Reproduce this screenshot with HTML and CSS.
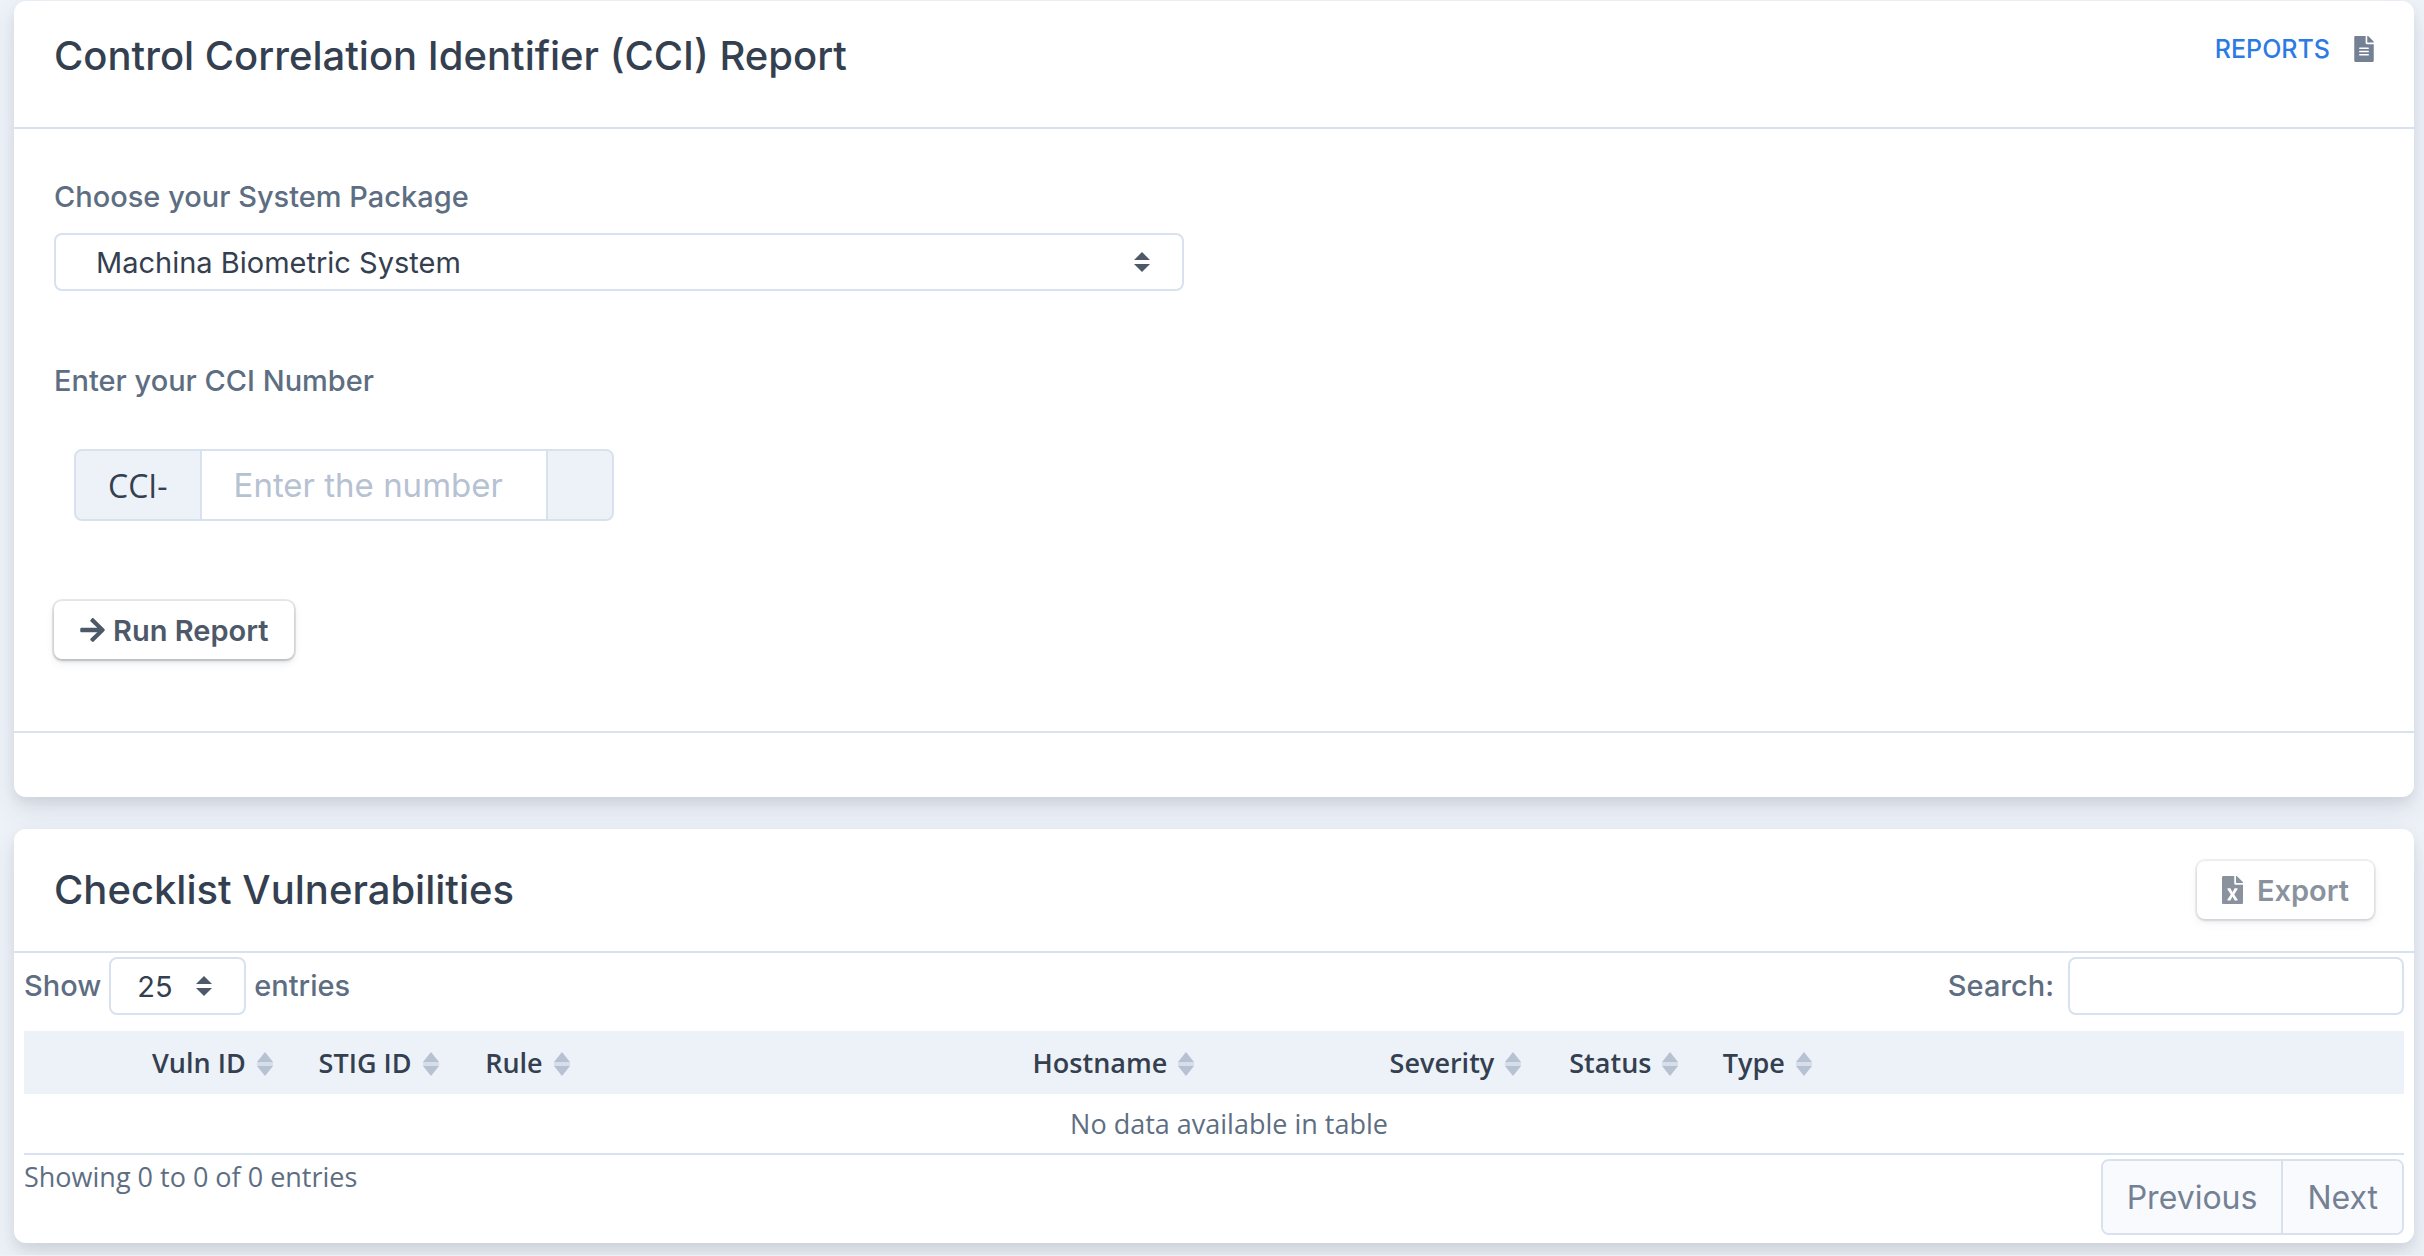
FILE: index.html
```html
<!DOCTYPE html>
<html lang="en">
<head>
    <meta charset="UTF-8">
    <meta name="viewport" content="width=device-width, initial-scale=1.0">
    <title>Control Correlation Identifier (CCI) Report</title>
    <link rel="stylesheet" href="styles.css">
</head>
<body>
    <!-- shared icons -->
    <svg class="sprite" aria-hidden="true">
        <symbol id="updown" viewBox="0 0 16 20">
            <path d="M8 0l8 8H0zM0 12h16l-8 8z" />
        </symbol>
        <symbol id="sort" viewBox="0 0 16 24">
            <path d="M8 0l8 10H0zM0 14h16L8 24z" />
            <path d="M0 10h16v4H0z" opacity="0.4" />
        </symbol>
    </svg>

    <div class="card">
        <div class="card-header report-header">
            <h4>Control Correlation Identifier (CCI) Report</h4>
            <div class="header-links">
                <a href="#">REPORTS</a>
                <svg class="icon-file" viewBox="0 0 384 512"><path d="M224 136V0H24C10.7 0 0 10.7 0 24v464c0 13.3 10.7 24 24 24h336c13.3 0 24-10.7 24-24V160H248c-13.2 0-24-10.8-24-24zm64 236c0 6.6-5.4 12-12 12H108c-6.6 0-12-5.4-12-12v-8c0-6.6 5.4-12 12-12h168c6.6 0 12 5.4 12 12v8zm0-64c0 6.6-5.4 12-12 12H108c-6.6 0-12-5.4-12-12v-8c0-6.6 5.4-12 12-12h168c6.6 0 12 5.4 12 12v8zm0-72v8c0 6.6-5.4 12-12 12H108c-6.6 0-12-5.4-12-12v-8c0-6.6 5.4-12 12-12h168c6.6 0 12 5.4 12 12zm96-114.1v6.1H256V0h6.1c6.4 0 12.5 2.5 17 7l97.9 98c4.5 4.5 7 10.6 7 16.9z" /></svg>
            </div>
        </div>
        <form class="card-body">
            <label for="systemPackage">Choose your System Package</label>
            <div class="select-box package-select">
                <select id="systemPackage">
                    <option>Machina Biometric System</option>
                </select>
                <svg class="updown"><use href="#updown" /></svg>
            </div>
            <label for="cciNumber">Enter your CCI Number</label>
            <div class="input-group">
                <span class="input-addon">CCI-</span>
                <input type="text" id="cciNumber" placeholder="Enter the number">
                <span class="input-addon"></span>
            </div>
            <button type="button" class="btn btn-run">
                <svg class="icon-arrow" viewBox="0 0 448 512"><path d="M190.5 66.9l22.2-22.2c9.4-9.4 24.6-9.4 33.9 0L441 239c9.4 9.4 9.4 24.6 0 33.9L246.6 467.3c-9.4 9.4-24.6 9.4-33.9 0l-22.2-22.2c-9.5-9.5-9.3-25 .4-34.3L311.4 296H24c-13.3 0-24-10.7-24-24v-32c0-13.3 10.7-24 24-24h287.4L190.9 101.2c-9.8-9.3-10-24.8-.4-34.3z" /></svg>
                Run Report
            </button>
        </form>
        <div class="card-footer"></div>
    </div>

    <div class="card">
        <div class="card-header list-header">
            <h4>Checklist Vulnerabilities</h4>
            <button type="button" class="btn btn-export" disabled>
                <svg class="icon-excel" viewBox="0 0 384 512"><path d="M224 136V0H24C10.7 0 0 10.7 0 24v464c0 13.3 10.7 24 24 24h336c13.3 0 24-10.7 24-24V160H248c-13.2 0-24-10.8-24-24zm60.1 106.5L224 336l60.1 93.5c5.1 8-.6 18.5-10.1 18.5h-34.9c-4.4 0-8.5-2.4-10.6-6.3C208.9 405.5 192 373 192 373c-6.4 14.8-10 20-36.6 68.8-2.1 3.9-6.1 6.3-10.5 6.3H110c-9.5 0-15.2-10.5-10.1-18.5l60.3-93.5-60.3-93.5c-5.2-8 .6-18.5 10.1-18.5h34.8c4.4 0 8.5 2.4 10.6 6.3 26.1 48.8 20 33.6 36.6 68.5 0 0 6.1-11.7 36.6-68.5 2.1-3.9 6.2-6.3 10.6-6.3H274c9.5-.1 15.2 10.4 10.1 18.4zM384 121.9v6.1H256V0h6.1c6.4 0 12.5 2.5 17 7l97.9 98c4.5 4.5 7 10.6 7 16.9z" /></svg>
                Export
            </button>
        </div>
        <div class="table-wrapper">
            <div class="table-tools">
                <div class="table-length">
                    <label for="pageLength">Show</label>
                    <div class="select-box length-select">
                        <select id="pageLength">
                            <option>25</option>
                        </select>
                        <svg class="updown"><use href="#updown" /></svg>
                    </div>
                    <label for="pageLength">entries</label>
                </div>
                <div class="table-filter">
                    <label for="tableSearch">Search:</label>
                    <input type="search" id="tableSearch">
                </div>
            </div>
            <table>
                <colgroup>
                    <col class="col-toggle">
                    <col class="col-id">
                    <col class="col-id">
                    <col class="col-rule">
                    <col class="col-host">
                    <col class="col-severity">
                    <col class="col-status">
                    <col>
                </colgroup>
                <thead>
                    <tr>
                        <th></th>
                        <th>Vuln ID<svg class="sort"><use href="#sort" /></svg></th>
                        <th>STIG ID<svg class="sort"><use href="#sort" /></svg></th>
                        <th>Rule<svg class="sort"><use href="#sort" /></svg></th>
                        <th>Hostname<svg class="sort"><use href="#sort" /></svg></th>
                        <th>Severity<svg class="sort"><use href="#sort" /></svg></th>
                        <th>Status<svg class="sort"><use href="#sort" /></svg></th>
                        <th>Type<svg class="sort"><use href="#sort" /></svg></th>
                    </tr>
                </thead>
                <tbody>
                    <tr>
                        <td colspan="8">No data available in table</td>
                    </tr>
                </tbody>
            </table>
            <div class="table-bottom">
                <div class="table-info">Showing 0 to 0 of 0 entries</div>
                <div class="pagination">
                    <button type="button" disabled>Previous</button>
                    <button type="button" disabled>Next</button>
                </div>
            </div>
        </div>
    </div>
</body>
</html>
```
FILE: styles.css
```css
* {
    box-sizing: border-box;
}

body {
    font-family: "Open Sans", "Noto Sans", sans-serif;
    font-size: 27px;
    line-height: 40px;
    color: #5e6e82;
    background-color: #edf2f9;
    margin: 0;
    padding: 1px 10px 12px 14px;
}

.sprite {
    position: absolute;
    width: 0;
    height: 0;
}

svg {
    fill: currentColor;
    flex-shrink: 0;
}

h4, label, select, input, button, .header-links {
    font-family: Inter, "Open Sans", sans-serif;
}

/* Cards */
.card {
    background-color: #fff;
    border-radius: 12px;
    box-shadow: 0 14px 28px rgba(65, 69, 88, 0.1), 0 6px 12px rgba(0, 0, 0, 0.07);
    margin-bottom: 32px;
}

.card:last-child {
    margin-bottom: 0;
}

.card-header {
    display: flex;
    justify-content: space-between;
    padding: 30px 40px;
    border-bottom: 2px solid #d8e2ef;
}

.report-header {
    height: 128px;
}

.list-header {
    align-items: center;
    height: 124px;
}

.card-header h4 {
    font-size: 40px;
    font-weight: 500;
    line-height: 50px;
    color: #344050;
    margin: 0;
}

.header-links {
    display: flex;
    align-items: center;
    gap: 24px;
    height: 36px;
    color: #748194;
    font-size: 25px;
    font-weight: 500;
}

.header-links a {
    color: #2c7be5;
    text-decoration: none;
}

.card-body {
    padding: 48px 40px 72px;
}

.card-footer {
    height: 66px;
    border-top: 2px solid #d8e2ef;
}

/* Form */
label {
    font-size: 29px;
    font-weight: 500;
    line-height: 40px;
}

.card-body label {
    display: block;
}

.select-box {
    position: relative;
    color: #4d5969;
}

.select-box select {
    appearance: none;
    width: 100%;
    height: 58px;
    padding: 0 40px;
    border: 2px solid #d8e2ef;
    border-radius: 8px;
    background-color: #fff;
    color: #344050;
    font-size: 29px;
}

.updown {
    position: absolute;
    top: 19px;
    right: 34px;
    width: 16px;
    height: 20px;
    pointer-events: none;
}

.package-select {
    width: 1130px;
    max-width: 100%;
    margin: 16px 0 70px;
}

.input-group {
    display: flex;
    width: 540px;
    height: 72px;
    margin: 48px 20px 80px;
    border: 2px solid #d8e2ef;
    border-radius: 8px;
    background-color: #edf2f9;
    overflow: hidden;
}

.input-addon {
    padding: 0 32px;
    line-height: 70px;
    font-size: 32px;
    color: #344050;
}

.input-group input {
    flex: 1;
    min-width: 0;
    padding: 0 32px;
    border: solid #d8e2ef;
    border-width: 0 2px;
    border-radius: 0;
    background-color: #fff;
    font-size: 33px;
}

.input-group input::placeholder {
    color: #b6c1d2;
}

/* Buttons */
.btn {
    display: flex;
    align-items: center;
    height: 58px;
    border: none;
    border-radius: 8px;
    background-color: #fff;
    color: #4d5969;
    font-size: 29px;
    font-weight: 600;
    box-shadow: 0 0 0 2px rgba(43, 45, 80, 0.1), 0 4px 10px rgba(43, 45, 80, 0.08), 0 2px 3px rgba(0, 0, 0, 0.1), 0 2px 4px rgba(0, 0, 0, 0.08);
}

.btn-run {
    gap: 8px;
    padding: 0 26px;
}

.btn-export {
    gap: 14px;
    padding: 0 25px;
    opacity: 0.65;
}

.icon-file {
    width: 20px;
    height: 26px;
}

.icon-arrow {
    width: 25px;
    height: 28px;
}

.icon-excel {
    width: 21px;
    height: 28px;
}

/* Table */
.table-wrapper {
    padding: 4px 10px 8px;
}

.table-tools, .table-bottom {
    display: flex;
    justify-content: space-between;
}

.table-length, .table-filter {
    display: flex;
    align-items: center;
    gap: 8px;
}

.length-select {
    width: 137px;
}

.length-select select {
    padding: 0 26px;
}

.table-filter {
    gap: 14px;
}

.table-filter input {
    width: 336px;
    height: 58px;
    padding: 0 16px;
    border: 2px solid #d8e2ef;
    border-radius: 8px;
    font-size: 29px;
}

table {
    width: 100%;
    margin-top: 16px;
    table-layout: fixed;
    border-collapse: collapse;
    border-bottom: 2px solid #d8e2ef;
}

th, td {
    padding: 0 18px 0 48px;
}

th {
    height: 63px;
    background-color: #edf2f9;
    color: #344050;
    font-weight: 600;
    text-align: left;
    white-space: nowrap;
}

td {
    height: 60px;
    text-align: center;
}

.col-toggle {
    width: 80px;
}

.col-id {
    width: 7%;
}

.col-rule {
    width: 23%;
}

.col-host {
    width: 15%;
}

.col-severity {
    width: 7.55%;
}

.col-status {
    width: 6.45%;
}

.sort {
    width: 16px;
    height: 24px;
    margin-left: 11px;
    vertical-align: -3px;
    color: #b6c1d2;
}

.table-info {
    padding-top: 2px;
}

.pagination {
    display: flex;
    margin-top: 4px;
    border: 2px solid #d8e2ef;
    border-radius: 8px;
    overflow: hidden;
}

.pagination button {
    height: 72px;
    padding: 0 24px;
    border: none;
    background-color: #f9fafd;
    color: #748194;
    font-size: 32px;
}

.pagination button + button {
    border-left: 2px solid #d8e2ef;
}
```
